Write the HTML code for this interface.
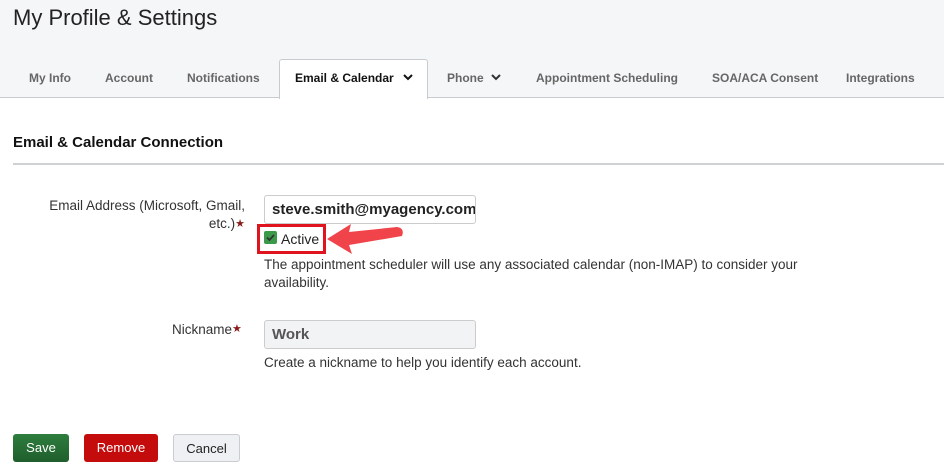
<!DOCTYPE html>
<html><head><style>
*{margin:0;padding:0;box-sizing:border-box}
body{width:944px;height:472px;background:#fff;font-family:"Liberation Sans",sans-serif;position:relative;overflow:hidden;color:#222}
.hdr{position:absolute;left:0;top:0;width:944px;height:98px;background:#f5f6f8;border-bottom:1px solid #c8cbd0}
.title{position:absolute;left:13px;top:5px;font-size:22px;color:#222}
.tab{position:absolute;top:71px;font-size:12px;font-weight:bold;color:#666}
.act{position:absolute;left:279px;top:59px;width:149px;height:40px;background:#fff;border:1px solid #c8cbd0;border-bottom:none;border-radius:3px 3px 0 0}
.a{position:absolute;font-size:13.5px}
.in{position:absolute;left:264px;width:212px;height:29px;border:1px solid #ccc;border-radius:3px;font-size:15px;font-weight:bold;padding:5px 0 0 7px;white-space:nowrap;overflow:hidden}
.btn{position:absolute;top:434px;height:28px;border-radius:3px;font-size:13px;text-align:center;line-height:27px}
.star{color:#8b1a1a;font-size:11px;vertical-align:top}
</style></head><body>
<div class="hdr">
<div class="title">My Profile &amp; Settings</div>
<div class="act"></div>
<div class="tab" style="left:29px">My Info</div>
<div class="tab" style="left:105px">Account</div>
<div class="tab" style="left:187px">Notifications</div>
<div class="tab" style="left:295px;color:#111">Email &amp; Calendar <svg width="12" height="10" viewBox="0 0 12 10" style="margin-left:5px"><path d="M2 3l4 4 4-4" stroke="#111" stroke-width="2" fill="none"/></svg></div>
<div class="tab" style="left:447px">Phone <svg width="12" height="10" viewBox="0 0 12 10" style="margin-left:3px"><path d="M2 3l4 4 4-4" stroke="#333" stroke-width="2" fill="none"/></svg></div>
<div class="tab" style="left:536px">Appointment Scheduling</div>
<div class="tab" style="left:712px">SOA/ACA Consent</div>
<div class="tab" style="left:846px">Integrations</div>
</div>
<div class="a" style="left:13px;top:134px;font-size:15px;font-weight:bold;color:#111">Email &amp; Calendar Connection</div>
<div style="position:absolute;left:13px;top:163px;width:931px;height:2px;background:#cfd1d5"></div>
<div class="a" style="left:30px;top:197px;width:215px;text-align:right;line-height:18px;color:#333">Email Address (Microsoft, Gmail, etc.)<span class="star">★</span></div>
<div class="in" style="top:195px">steve.smith@myagency.com</div>
<div style="position:absolute;left:257px;top:224px;width:69px;height:30px;border:3px solid #e0141e"></div>
<div style="position:absolute;left:264px;top:231px;width:13px;height:13px;background:#3a9a4a;border-radius:2px"><svg width="13" height="13"><path d="M3 6.5l2.5 2.5 4.5-5" stroke="#333" stroke-width="1.8" fill="none"/></svg></div>
<div class="a" style="left:281px;top:231px;font-size:14px">Active</div>
<svg style="position:absolute;left:325px;top:220px" width="80" height="36"><path d="M2 19 L26 4 L24 12 L72 7 Q80 8 77 16 L24 25 L27 34 Z" fill="#f0434a"/></svg>
<div class="a" style="left:264px;top:256px;line-height:18px;width:570px;color:#333">The appointment scheduler will use any associated calendar (non-IMAP) to consider your availability.</div>
<div class="a" style="left:172px;top:322px;color:#333">Nickname<span class="star">★</span></div>
<div class="in" style="top:320px;background:#f2f3f5;color:#555">Work</div>
<div class="a" style="left:264px;top:355px;color:#333">Create a nickname to help you identify each account.</div>
<div class="btn" style="left:13px;width:56px;background:linear-gradient(#2e7d3e,#1f5e2c);color:#fff">Save</div>
<div class="btn" style="left:84px;width:74px;background:#c40c0c;color:#fff">Remove</div>
<div class="btn" style="left:173px;width:67px;background:#eef0f3;border:1px solid #c9ccd1;color:#222">Cancel</div>
</body></html>
